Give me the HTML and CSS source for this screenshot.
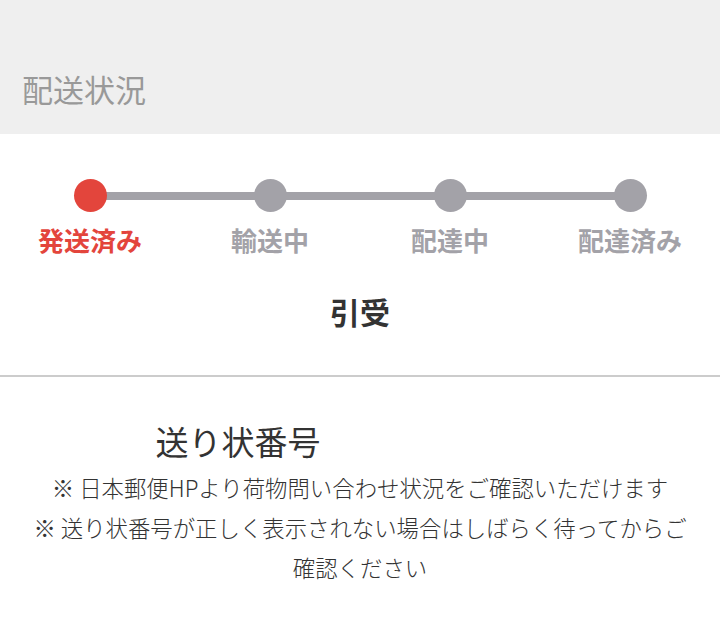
FILE: index.html
```html
<!DOCTYPE html>
<html lang="ja">
<head>
    <meta charset="UTF-8">
    <title>配送状況</title>
    <link rel="stylesheet" href="styles.css">
</head>
<body>
    <div class="page-header">
        <h1>配送状況</h1>
    </div>

    <div class="status-box">
        <div class="stepper">
            <div class="step-line"></div>
            <div class="step done">
                <span class="dot"></span>
                <span class="label">発送済み</span>
            </div>
            <div class="step">
                <span class="dot"></span>
                <span class="label">輸送中</span>
            </div>
            <div class="step">
                <span class="dot"></span>
                <span class="label">配達中</span>
            </div>
            <div class="step">
                <span class="dot"></span>
                <span class="label">配達済み</span>
            </div>
        </div>
        <p class="status-text">引受</p>
    </div>

    <div class="tracking">
        <h2>送り状番号</h2>
        <p class="note">※ 日本郵便HPより荷物問い合わせ状況をご確認いただけます</p>
        <p class="note">※ 送り状番号が正しく表示されない場合はしばらく待ってからご確認ください</p>
    </div>
</body>
</html>
```

FILE: styles.css
```css
body {
    margin: 0;
    font-family: "Noto Sans CJK JP", "Noto Sans", sans-serif;
    background-color: #fff;
    color: #333;
}

.page-header {
    background-color: #efefef;
    height: 134px;
    box-sizing: border-box;
    padding: 67px 22px 0;
}

.page-header h1 {
    margin: 0;
    font-size: 31px;
    font-weight: normal;
    line-height: 44px;
    color: #999;
}

.status-box {
    border-bottom: 2px solid #ccc;
    padding-top: 45px;
    height: 243px;
    box-sizing: border-box;
}

.stepper {
    position: relative;
    display: flex;
}

.step-line {
    position: absolute;
    left: 90px;
    right: 90px;
    top: 13px;
    height: 8px;
    background-color: #a3a2a8;
}

.step {
    flex: 1;
    display: flex;
    flex-direction: column;
    align-items: center;
    position: relative;
}

.dot {
    width: 33px;
    height: 33px;
    border-radius: 50%;
    background-color: #a3a2a8;
}

.label {
    margin-top: 10px;
    font-size: 26px;
    font-weight: bold;
    line-height: 36px;
    color: #a3a2a8;
}

.step.done .dot {
    background-color: #e3453c;
}

.step.done .label {
    color: #e3453c;
}

.status-text {
    margin: 31px 0 0;
    text-align: center;
    font-size: 30px;
    font-weight: bold;
    line-height: 44px;
    color: #333;
}

.tracking {
    padding: 40px 28px 0;
    text-align: center;
}

.tracking h2 {
    margin: 0 0 2px;
    padding-right: 244px;
    font-size: 33px;
    font-weight: normal;
    line-height: 48px;
    color: #333;
}

.note {
    margin: 0;
    font-size: 22.4px;
    font-weight: 300;
    line-height: 40px;
    color: #333;
}
```
